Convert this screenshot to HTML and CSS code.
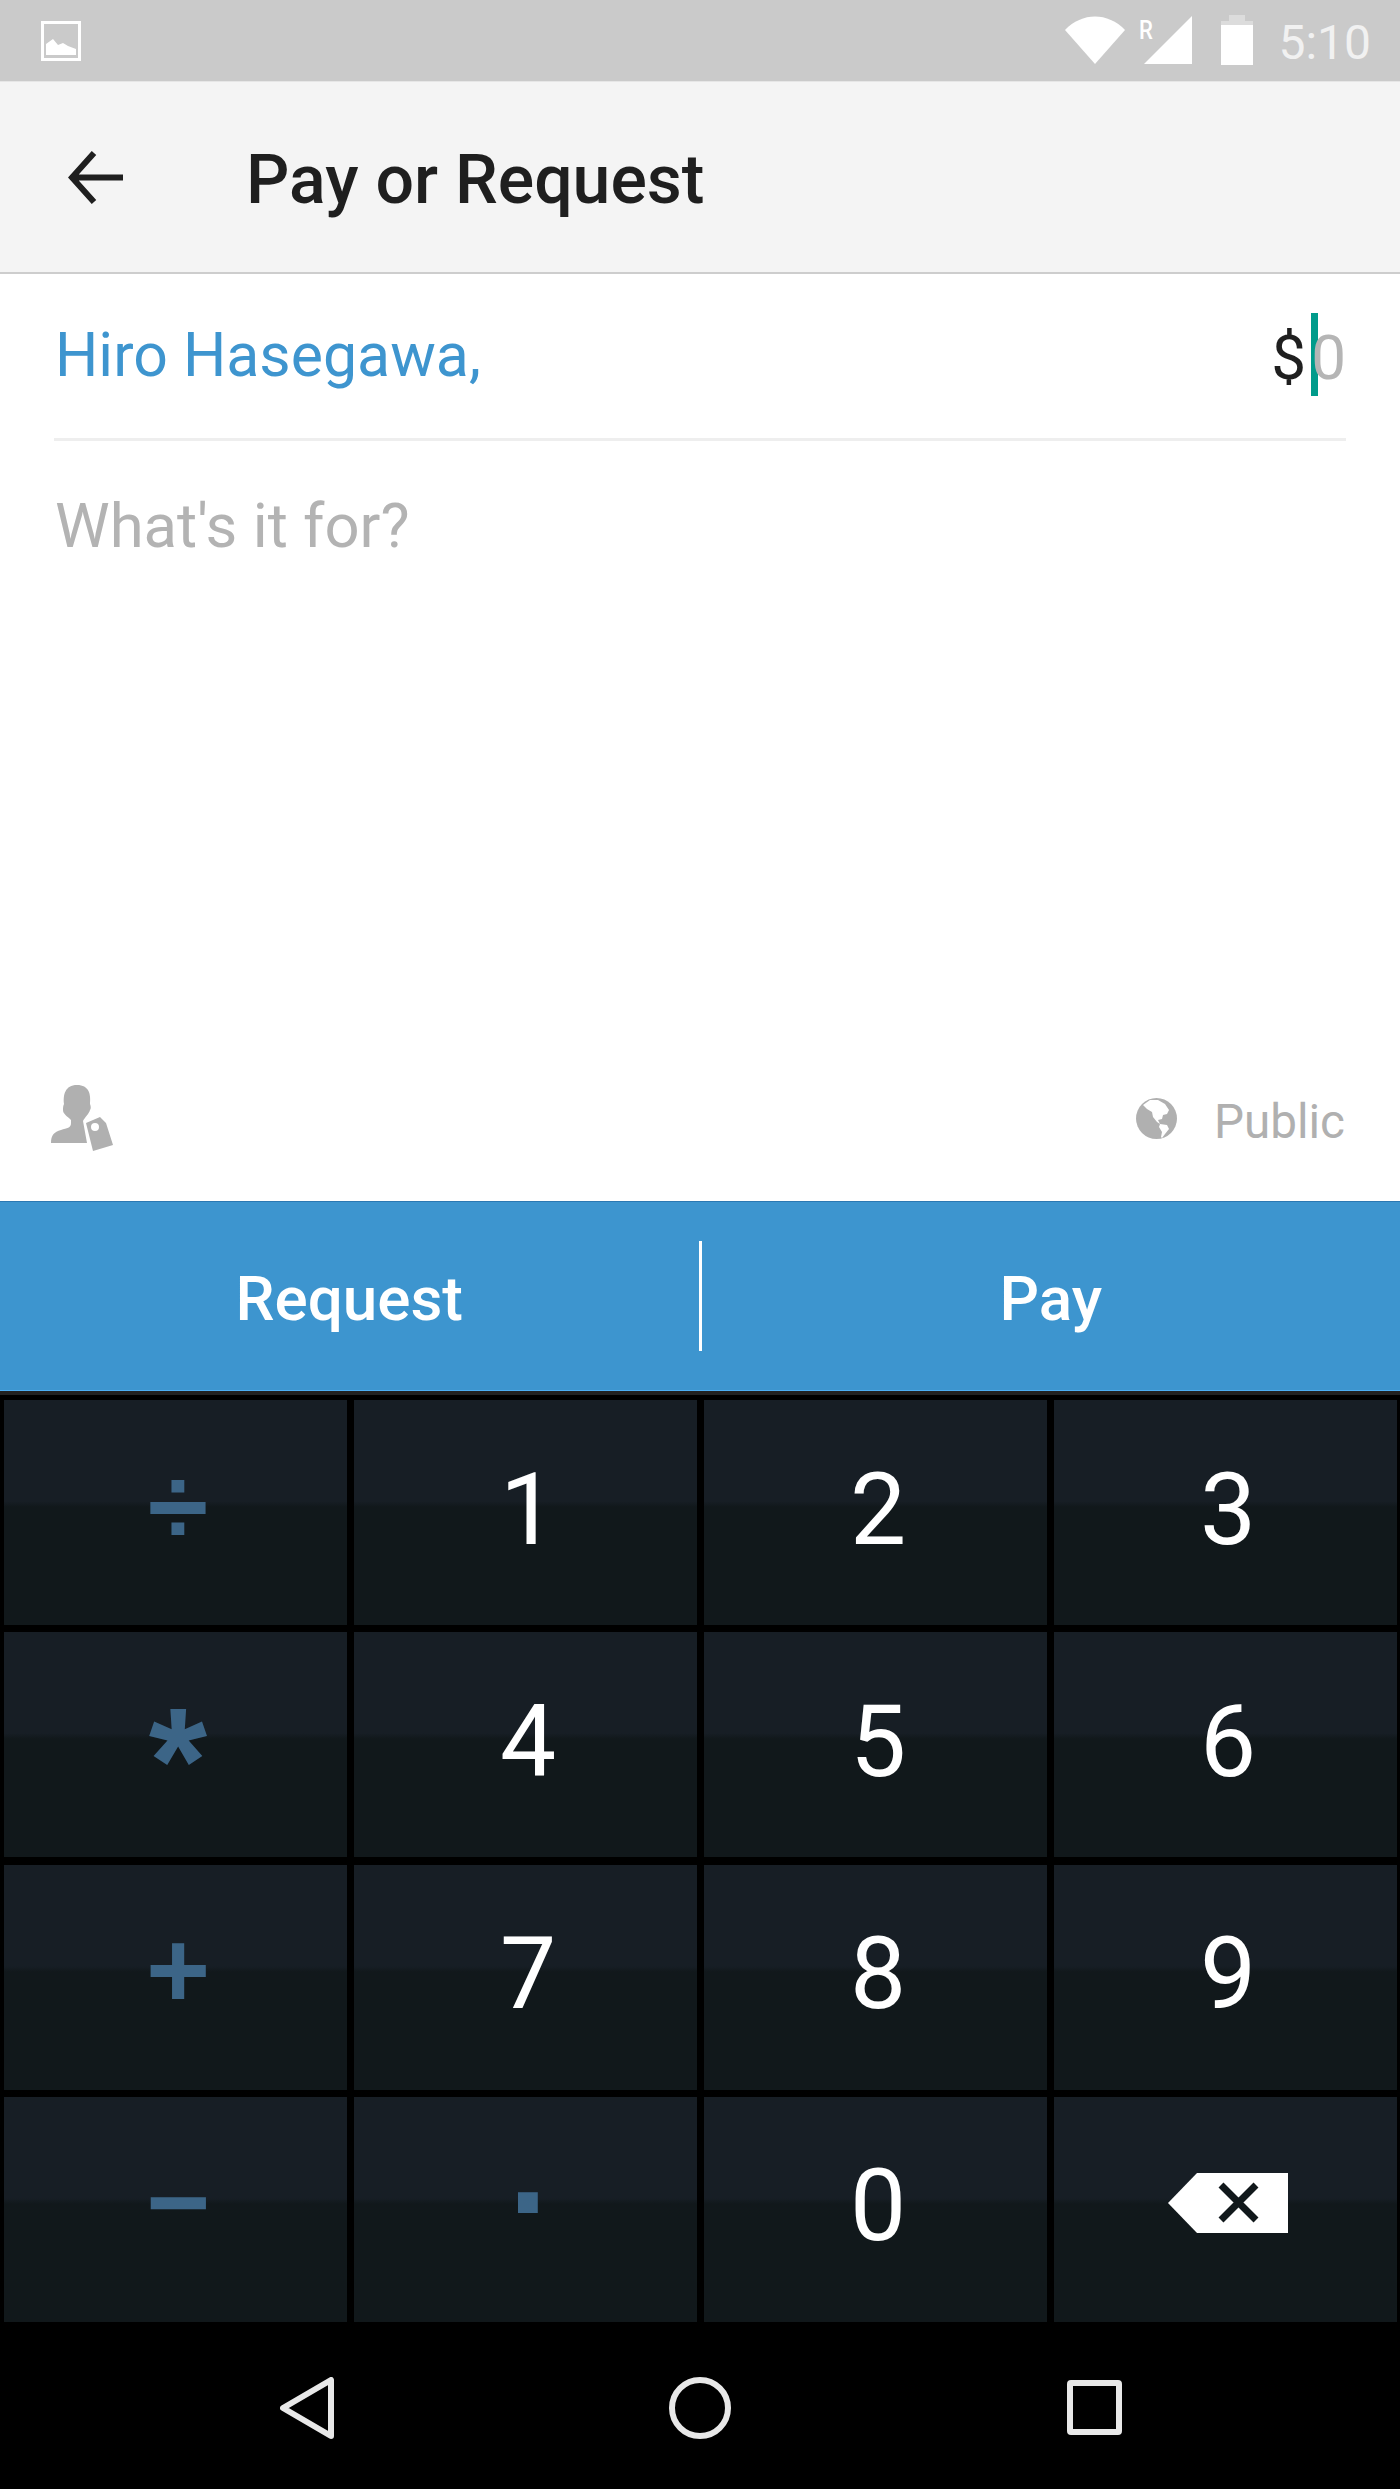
FILE: index.html
```html
<!DOCTYPE html>
<html lang="en">
<head>
<meta charset="utf-8">
<title>Pay or Request</title>
<link rel="stylesheet" href="styles.css">
</head>
<body>
<div class="phone">
  <header class="status">
    <svg class="ic-image" viewBox="0 0 40 40"><path class="ic-white" fill-rule="evenodd" d="M0 0H40V40H0ZM3 3V37H37V3Z"/><path class="ic-white" d="M5 34V23L12 18L17 24L22 22L27 25L35 28V34Z"/></svg>
    <div class="status-right">
      <svg class="ic-wifi" viewBox="0 0 60 48"><path class="ic-white" d="M0 14C17 -4 43 -4 60 14L30 48Z"/></svg>
      <span class="roam">R</span>
      <svg class="ic-signal" viewBox="0 0 48 48"><path class="ic-white" d="M48 0V48H0Z"/></svg>
      <svg class="ic-battery" viewBox="0 0 32 50"><path class="ic-cap" d="M8 0H24V6H32V10H0V6H8Z"/><path class="ic-white" d="M0 10H32V50H0Z"/></svg>
      <span class="clock">5:10</span>
    </div>
  </header>
  <div class="toolbar">
    <svg class="ic-back" viewBox="0 0 55 53"><path d="M55 26.5H4M26 2L4 26.5L26 51" fill="none" stroke="#1f1f1f" stroke-width="6"/></svg>
    <h1 class="title">Pay or Request</h1>
  </div>
  <main class="form">
    <div class="to-row">
      <span class="recipient">Hiro Hasegawa,</span>
      <span class="amount"><span class="dollar">$</span><span class="caret"></span><span class="zero">0</span></span>
    </div>
    <p class="note">What's it for?</p>
    <div class="meta-row">
      <svg class="ic-tag" viewBox="0 0 62 66"><path class="ic-gray" d="M0 58C0 50 3 47 10 45C16 43 20 43 20 38V35C16 31 12 29 12 25C12 23 12 21 13 19C12 10 14 0 26 0C38 0 40 9 39 19C40 21 40 24 39 25C38 29 34 32 32 36L36 58Z"/><path class="ic-gray" fill-rule="evenodd" d="M35 38L49 32L55 38L62 60L42 66ZM40 42a4 4 0 1 0 8 0a4 4 0 1 0 -8 0Z"/></svg>
      <div class="privacy">
        <svg class="ic-globe" viewBox="0 0 41 41"><circle class="ic-gray" cx="20.5" cy="20.5" r="20.5"/><path class="ic-white" d="M7 7L14 2L22 2L29 6L33 12L31 16L27 17L26 21L22 22L24 26L21 24L17 19L16 14L11 11ZM24 26L31 27L33 31L29 36L26 40L25 39L26 34L23 29Z"/></svg>
        <span class="privacy-label">Public</span>
      </div>
    </div>
  </main>
  <div class="actions">
    <button class="action">Request</button>
    <span class="action-sep"></span>
    <button class="action">Pay</button>
  </div>
  <div class="keypad">
    <div class="key op op-div">÷</div><div class="key">1</div><div class="key">2</div><div class="key">3</div>
    <div class="key op op-mul">*</div><div class="key">4</div><div class="key">5</div><div class="key">6</div>
    <div class="key op op-add">+</div><div class="key">7</div><div class="key">8</div><div class="key">9</div>
    <div class="key op op-sub">−</div><div class="key op op-dot">.</div><div class="key">0</div>
    <div class="key"><svg class="ic-del" viewBox="0 0 120 60"><path fill="#fff" d="M29 0H120V60H29L0 30Z"/><path d="M53 12L88 47M88 12L53 47" stroke="#11181b" stroke-width="7" fill="none"/></svg></div>
  </div>
  <nav class="navbar">
    <svg class="ic-navback" viewBox="0 0 54 62"><path d="M51 3V59L3 31Z" fill="none" stroke="#e8e8e8" stroke-width="6" stroke-linejoin="round"/></svg>
    <svg class="ic-navhome" viewBox="0 0 62 62"><circle cx="31" cy="31" r="28" fill="none" stroke="#e8e8e8" stroke-width="6"/></svg>
    <svg class="ic-navrecent" viewBox="0 0 55 55"><rect x="3" y="3" width="49" height="49" rx="1" fill="none" stroke="#e8e8e8" stroke-width="6"/></svg>
  </nav>
</div>
</body>
</html>
```
FILE: styles.css
```css
* { box-sizing: border-box; }
html, body { margin: 0; padding: 0; background: #000; }
body { font-family: Roboto, "Liberation Sans", sans-serif; }
.phone { width: 1400px; height: 2489px; display: flex; flex-direction: column; overflow: hidden; }
.ic-white { fill: #fff; }
.ic-gray { fill: #b0b0b0; }
.ic-cap { fill: #dcdcdc; }

.status { height: 82px; flex: none; background: #cacaca; border-bottom: 1px solid #e6e6e6; display: flex; align-items: flex-start; justify-content: space-between; padding: 21px 29px 0 41px; }
.ic-image { width: 40px; height: 40px; display: block; }
.status-right { display: flex; align-items: flex-start; margin-top: -6px; }
.ic-wifi { width: 60px; height: 48px; margin-top: 1px; margin-right: 14px; display: block; }
.roam { width: 14px; margin-right: -9px; margin-top: 2px; font-size: 26px; line-height: 26px; font-weight: 500; color: #fff; transform: scaleX(.85); transform-origin: left; }
.ic-signal { width: 48px; height: 48px; margin-top: 1px; margin-right: 29px; display: block; }
.ic-battery { width: 32px; height: 50px; display: block; margin-right: 25px; }
.clock { font-size: 48px; line-height: 50px; color: #f1f1f1; margin-top: 3px; }

.toolbar { height: 192px; flex: none; background: #f4f4f4; border-bottom: 2px solid #cdcdcd; display: flex; align-items: center; padding-left: 68px; }
.ic-back { width: 55px; height: 53px; display: block; margin-top: 1px; }
.title { margin: 6px 0 0 123px; font-size: 68px; line-height: 80px; font-weight: 500; color: #1f1f1f; }

.form { height: 927px; flex: none; background: #fff; padding: 0 54px; display: flex; flex-direction: column; }
.to-row { height: 167px; flex: none; border-bottom: 3px solid #eee; display: flex; align-items: flex-start; justify-content: space-between; }
.recipient { font-size: 60.8px; line-height: 70px; color: #3e95cf; margin-top: 47px; margin-left: 1px; }
.amount { display: flex; align-items: flex-start; margin-top: 39px; font-size: 62px; line-height: 84px; }
.dollar { color: #1f1f1f; padding-top: 3px; }
.caret { width: 7px; height: 83px; background: #009b8b; margin-left: 5px; margin-right: -7px; }
.zero { color: #b5b5b5; padding-top: 3px; }
.note { margin: 50px 0 0 1px; font-size: 61.6px; line-height: 70px; color: #b3b3b3; flex: 1; }
.meta-row { display: flex; justify-content: space-between; align-items: flex-start; height: 116px; margin-left: -3px; }
.ic-tag { width: 62px; height: 66px; display: block; }
.privacy { display: flex; align-items: flex-start; margin-top: 13px; }
.ic-globe { width: 41px; height: 41px; display: block; margin-right: 37px; }
.privacy-label { font-size: 47.6px; line-height: 48px; color: #b0b0b0; margin-right: 1px; }

.actions { height: 190px; flex: none; background: #3d95cf; border-top: 1px solid #2b78b2; border-bottom: 1px solid #4db0f5; display: flex; align-items: center; }
.action { flex: 1; border: 0; background: none; padding: 6px 0 0; font: 500 62px/70px Roboto, sans-serif; color: #fff; }
.action-sep { width: 3px; height: 110px; background: #fff; flex: none; }

.keypad { flex: none; height: 932px; padding: 5px 3.5px 0; display: grid; grid-template-columns: repeat(4, 1fr); grid-auto-rows: 225px; gap: 7.33px 7px; border-top: 4px solid #222; }
.key { display: flex; align-items: center; justify-content: center; padding: 0 0 6px 6px; font-size: 100px; line-height: 1; color: #fff; background: linear-gradient(#171e25 0, #171e25 45%, #11181b 47.5%, #11181b 100%); }
.op { color: #3c6587; font-family: "Liberation Sans", Arial, sans-serif; font-weight: 700; font-size: 110px; }
.op-div { padding-bottom: 14px; }
.op-mul { font-size: 150px; padding-bottom: 0; padding-top: 32px; }
.op-add { padding-bottom: 14px; }
.op-sub { padding-bottom: 14px; }
.op-dot { font-size: 140px; padding-bottom: 88px; }
.ic-del { width: 120px; height: 60px; display: block; margin-bottom: 7px; }

.navbar { flex: 1; background: #000; display: flex; align-items: flex-start; padding: 54px 0 0 280px; }
.ic-navback { width: 54px; height: 62px; display: block; }
.ic-navhome { width: 62px; height: 62px; display: block; margin-left: 335px; }
.ic-navrecent { width: 55px; height: 55px; display: block; margin: 3px 0 0 336px; }
```
